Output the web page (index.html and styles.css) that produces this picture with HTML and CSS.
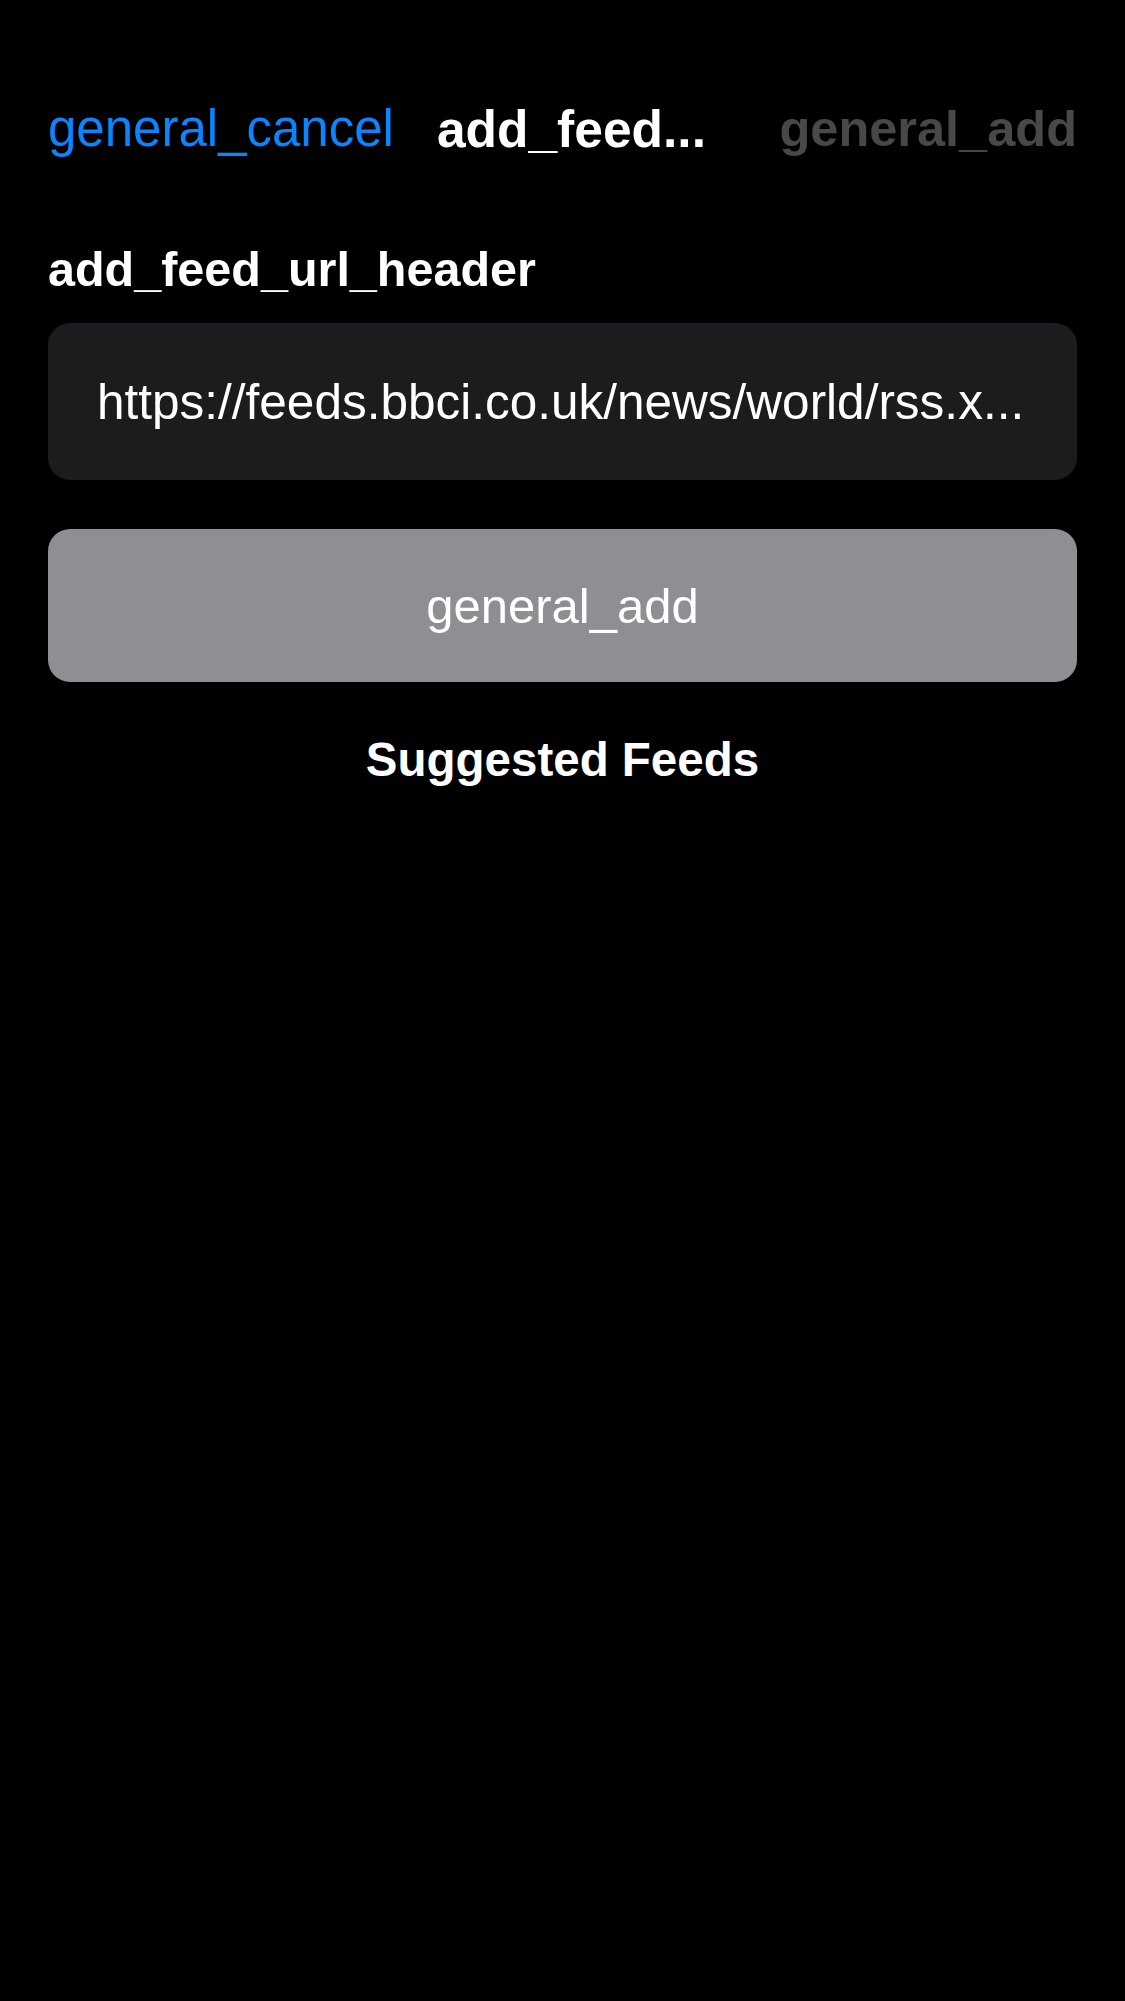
FILE: index.html
```html
<!DOCTYPE html>
<html lang="en">
<head>
<meta charset="utf-8">
<title>add_feed</title>
<link rel="stylesheet" href="styles.css">
</head>
<body>
<div class="screen">
  <header class="nav">
    <span class="nav-cancel">general_cancel</span>
    <span class="nav-title">add_feed...</span>
    <span class="nav-add">general_add</span>
  </header>
  <main class="content">
    <h2 class="section-header">add_feed_url_header</h2>
    <div class="url-field"><span class="url-text">https://feeds.bbci.co.uk/news/world/rss.x...</span></div>
    <div class="add-button">general_add</div>
    <h3 class="suggested">Suggested Feeds</h3>
  </main>
</div>
</body>
</html>
```

FILE: styles.css
```css
html, body {
  margin: 0;
  padding: 0;
  background: #000;
}
body {
  font-family: "Liberation Sans", Arial, sans-serif;
  color: #fff;
}
.screen {
  width: 1125px;
  min-height: 2001px;
  background: #000;
}
.nav {
  display: flex;
  align-items: center;
  padding: 99px 48px 0 48px;
  height: 60px;
  line-height: 60px;
}
.nav-cancel {
  font-size: 51px;
  color: #0a84ff;
}
.nav-title {
  margin-left: 43px;
  font-size: 51.5px;
  font-weight: 700;
  color: #fff;
}
.nav-add {
  margin-left: auto;
  font-size: 50.5px;
  font-weight: 700;
  color: #48484a;
}
.content {
  display: flex;
  flex-direction: column;
  padding: 0 48px;
}
.section-header {
  margin: 80px 0 0 0;
  font-size: 48.5px;
  line-height: 60px;
  font-weight: 700;
}
.url-field {
  margin-top: 24px;
  height: 157px;
  border-radius: 22px;
  background: #1c1c1e;
  display: flex;
  align-items: center;
  padding: 0 49px;
}
.url-text {
  font-size: 49.5px;
  line-height: 60px;
  white-space: nowrap;
  overflow: hidden;
}
.add-button {
  margin-top: 49px;
  height: 153px;
  border-radius: 22px;
  background: #8e8e93;
  display: flex;
  align-items: center;
  justify-content: center;
  font-size: 49px;
  line-height: 60px;
  color: #fff;
}
.suggested {
  margin: 48px 0 0 0;
  text-align: center;
  font-size: 47.5px;
  line-height: 60px;
  font-weight: 700;
}
```
